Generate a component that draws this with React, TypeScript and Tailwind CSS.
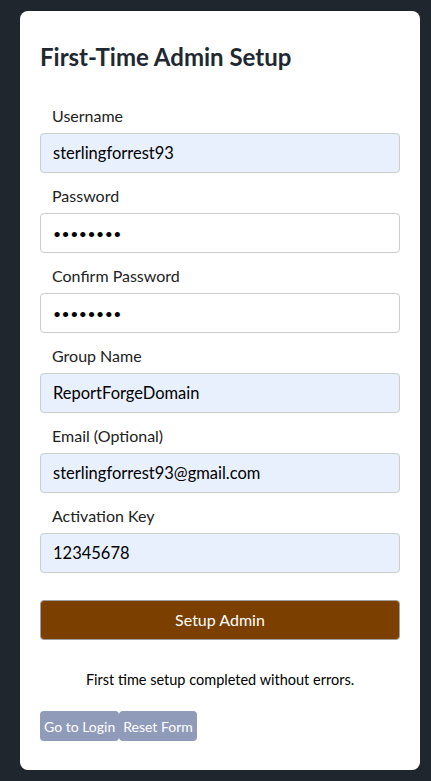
import React, { useState } from "react";

const fields = [
  { label: "Username", type: "text", value: "sterlingforrest93", filled: true },
  { label: "Password", type: "password", value: "password", filled: false },
  { label: "Confirm Password", type: "password", value: "password", filled: false },
  { label: "Group Name", type: "text", value: "ReportForgeDomain", filled: true },
  { label: "Email (Optional)", type: "email", value: "sterlingforrest93@gmail.com", filled: true },
  { label: "Activation Key", type: "text", value: "12345678", filled: true },
];

export default function App() {
  const [values, setValues] = useState(fields.map((f) => f.value));

  return (
    <div
      className="min-h-screen bg-[#1f262e] pt-[11px] pl-[20px]"
      style={{ fontFamily: "Lato, 'Open Sans', sans-serif" }}
    >
      <div className="w-[400px] rounded-lg bg-white px-5 pt-[30px] pb-[29px]">
        <h2 className="text-[24px] leading-8 font-bold text-[#222831]">First-Time Admin Setup</h2>

        <form className="mt-[31px]" onSubmit={(e) => e.preventDefault()}>
          {fields.map((field, i) => (
            <div key={field.label} className="mb-[11px]">
              <label className="mb-[5px] block pl-3 text-[16px] leading-6 text-[#222]">{field.label}</label>
              <input
                type={field.type}
                value={values[i]}
                onChange={(e) => {
                  const next = [...values];
                  next[i] = e.target.value;
                  setValues(next);
                }}
                className={`block h-10 w-full rounded border border-[#ccc] px-3 text-black outline-none ${
                  field.filled ? "bg-[#e8f0fe]" : "bg-white"
                } ${field.type === "password" ? "text-[14px] tracking-[0.5px]" : "text-[16.5px]"}`}
              />
            </div>
          ))}

          <button
            type="submit"
            className="mt-[27px] block h-10 w-full rounded border border-[#a0a0a0] bg-[#7b3f00] text-[16px] text-white"
          >
            Setup Admin
          </button>
        </form>

        <p className="mt-[28px] text-center text-[14.5px] leading-6 text-black">
          First time setup completed without errors.
        </p>

        <div className="mt-[19px] flex">
          <button className="h-[30px] rounded bg-[#8f9bb9] px-[4px] text-[14px] text-white">Go to Login</button>
          <button className="h-[30px] rounded bg-[#8f9bb9] px-[4px] text-[14px] text-white">Reset Form</button>
        </div>
      </div>
    </div>
  );
}
